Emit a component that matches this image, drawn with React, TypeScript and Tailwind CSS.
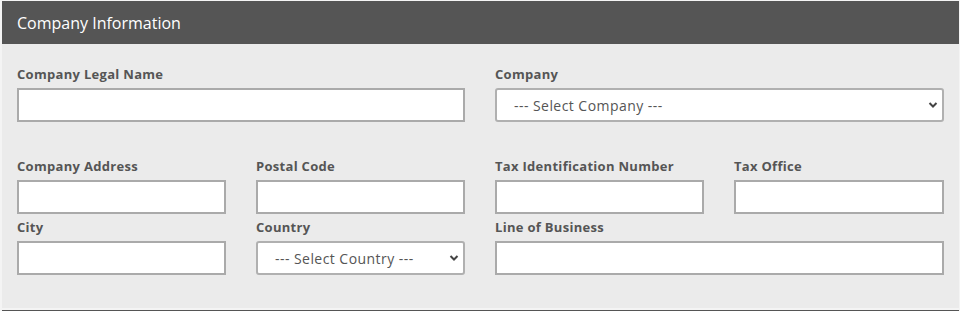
import React from "react";

const font = { fontFamily: "'Open Sans', Lato, sans-serif" };

function Label({ children }: { children: React.ReactNode }) {
  return (
    <label className="block text-[13px] leading-[18px] font-bold text-[#555] mb-[5px] tracking-[0.3px]">
      {children}
    </label>
  );
}

function TextInput() {
  return <input type="text" className="block w-full h-[34px] border-2 border-[#aaa] bg-white outline-none" />;
}

function Select({ placeholder }: { placeholder: string }) {
  return (
    <div className="relative">
      <select className="block w-full h-[34px] appearance-none rounded-[3px] border-2 border-[#b0b0b0] bg-white pl-[17px] text-[14px] tracking-[0.45px] text-[#555] outline-none">
        <option>{placeholder}</option>
      </select>
      <svg className="pointer-events-none absolute right-[6px] top-[13px]" width="10" height="8" viewBox="0 0 10 8">
        <path d="M1.5 2 L5 5.5 L8.5 2" fill="none" stroke="#444" strokeWidth="2" />
      </svg>
    </div>
  );
}

export default function App() {
  return (
    <div className="w-[960px] h-[311px] bg-[#f4f4f4] pt-px" style={font}>
      <div className="ml-[2px] w-[957px]">
        <div className="h-[43px] bg-[#555] text-white text-[16px] px-[15px] flex items-center">
          Company Information
        </div>
        <div className="bg-[#ebebeb] px-[15px] pt-[21px] pb-[33px]">
          <div className="grid grid-cols-[448px_1fr] gap-x-[30px]">
            <div>
              <Label>Company Legal Name</Label>
              <TextInput />
            </div>
            <div>
              <Label>Company</Label>
              <Select placeholder="--- Select Company ---" />
            </div>
          </div>
          <div className="grid grid-cols-[209px_209px_209px_1fr] gap-x-[30px] gap-y-[4px] mt-[35px]">
            <div>
              <Label>Company Address</Label>
              <TextInput />
            </div>
            <div>
              <Label>Postal Code</Label>
              <TextInput />
            </div>
            <div>
              <Label>Tax Identification Number</Label>
              <TextInput />
            </div>
            <div>
              <Label>Tax Office</Label>
              <TextInput />
            </div>
            <div>
              <Label>City</Label>
              <TextInput />
            </div>
            <div>
              <Label>Country</Label>
              <Select placeholder="--- Select Country ---" />
            </div>
            <div className="col-span-2">
              <Label>Line of Business</Label>
              <TextInput />
            </div>
          </div>
        </div>
        <div className="mt-[2px] h-px bg-[#555]" />
      </div>
    </div>
  );
}
